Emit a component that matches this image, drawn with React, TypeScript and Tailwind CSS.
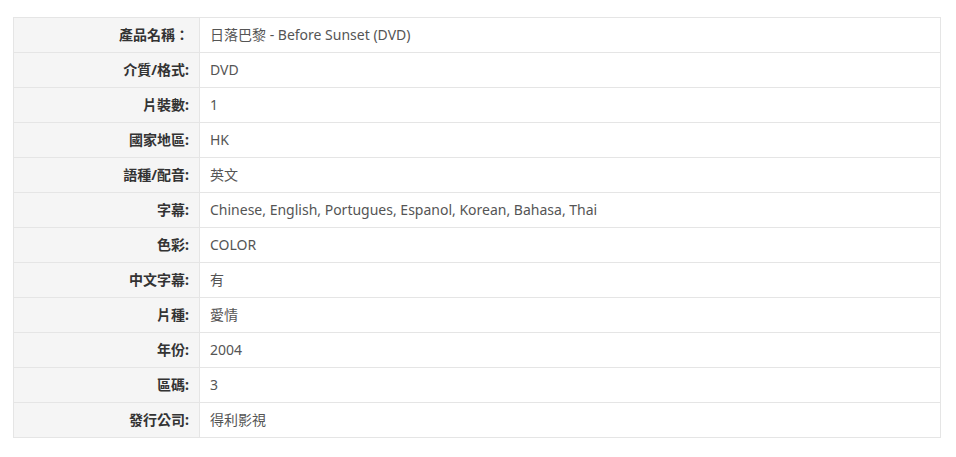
const ROWS: [string, string][] = [
  ['產品名稱：', '日落巴黎 - Before Sunset (DVD)'],
  ['介質/格式:', 'DVD'],
  ['片裝數:', '1'],
  ['國家地區:', 'HK'],
  ['語種/配音:', '英文'],
  ['字幕:', 'Chinese, English, Portugues, Espanol, Korean, Bahasa, Thai'],
  ['色彩:', 'COLOR'],
  ['中文字幕:', '有'],
  ['片種:', '愛情'],
  ['年份:', '2004'],
  ['區碼:', '3'],
  ['發行公司:', '得利影視'],
];

export default function App() {
  return (
    <div
      className="h-[457px] w-[956px] bg-white pl-[13px] pt-[17px]"
      style={{ fontFamily: '"Noto Sans", "Noto Sans CJK TC", sans-serif' }}
    >
      <table className="w-[928px] border-collapse text-[14px]">
        <tbody>
          {ROWS.map(([label, value]) => (
            <tr key={label} className="h-[35px]">
              <th className="w-[186px] border border-[#e5e5e5] bg-[#f5f5f5] pr-[10px] pb-[2px] text-right font-bold text-[#333]">
                {label}
              </th>
              <td className="border border-[#e5e5e5] pl-[10px] pb-[2px] text-left text-[#555]">{value}</td>
            </tr>
          ))}
        </tbody>
      </table>
    </div>
  );
}
